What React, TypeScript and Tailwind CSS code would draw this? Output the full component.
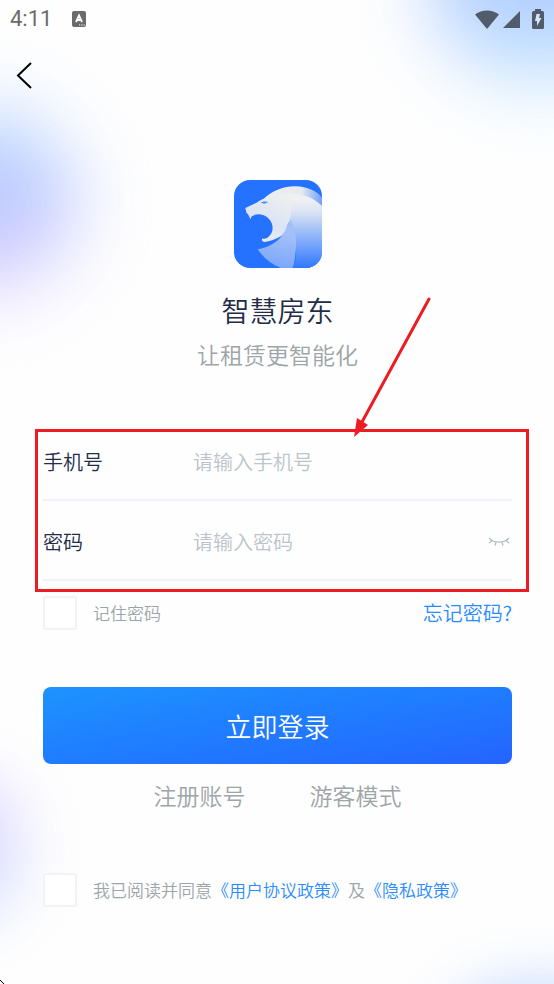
import React, { useState } from 'react';

const LionLogo: React.FC = () => (
  <svg viewBox="30 30 263 263" className="h-[88px] w-[88px]" role="img" aria-label="智慧房东">
    <defs>
      <clipPath id="tile">
        <rect x="30" y="30" width="263" height="263" rx="48" />
      </clipPath>
      <linearGradient id="mane" x1="0" y1="90" x2="0" y2="293" gradientUnits="userSpaceOnUse">
        <stop offset="0" stopColor="#eef0f3" />
        <stop offset="0.15" stopColor="#dfe6f3" />
        <stop offset="1" stopColor="#3078ff" />
      </linearGradient>
      <linearGradient id="crest" x1="120" y1="0" x2="293" y2="0" gradientUnits="userSpaceOnUse">
        <stop offset="0" stopColor="#eeeeee" />
        <stop offset="0.65" stopColor="#e6eaf1" />
        <stop offset="1" stopColor="#6f9ff8" />
      </linearGradient>
      <linearGradient id="chest" x1="180" y1="190" x2="160" y2="293" gradientUnits="userSpaceOnUse">
        <stop offset="0" stopColor="#a3c0f8" />
        <stop offset="1" stopColor="#7aa6fb" />
      </linearGradient>
      <linearGradient id="head" x1="190" y1="80" x2="130" y2="215" gradientUnits="userSpaceOnUse">
        <stop offset="0" stopColor="#efefef" />
        <stop offset="0.6" stopColor="#dbe4f5" />
        <stop offset="1" stopColor="#e8edf6" />
      </linearGradient>
    </defs>
    <g clipPath="url(#tile)">
      <rect x="30" y="30" width="263" height="263" fill="#2472ff" />
      <path d="M112 92 C148 58 182 48 214 49 C250 50 276 62 293 82 V112 C250 76 180 80 112 92 Z" fill="url(#crest)" />
      <path d="M150 80 C205 60 262 74 293 108 V293 H205 C215 275 217 250 215 228 L190 150 Z" fill="url(#mane)" />
      <path d="M101 237 C134 230 158 217 172 197 L200 148 C213 178 218 208 215 237 C213 260 211 276 205 293 H170 C139 281 116 260 101 237 Z" fill="url(#chest)" />
      <path
        d="M64 114 C76 109 86 103 98 98 C106 91 113 88 121 86 C145 73 170 70 196 76 C204 100 204 130 193 157 C186 176 181 188 170 198 C155 207 138 214 120 215 C113 214 112 208 115 205 C122 207 129 205 134 199 C145 190 148 174 143 160 C137 143 121 132 104 132 C94 132 87 135 82 140 L79 147 L72 132 L67 128 Z"
        fill="url(#head)"
      />
      <path d="M108 100 C114 94 124 93 133 96 C127 97 126 101 119 101 C115 98 112 99 108 100 Z" fill="#4d8afd" />
    </g>
  </svg>
);

const ClosedEye: React.FC = () => (
  <svg viewBox="0 0 22 10" className="h-[10px] w-[22px]" fill="none" stroke="#b4bec6" strokeWidth="1.3">
    <path d="M2 2.5 C7 6 15 6 20 2.5" />
    <path d="M1 1 L4 3.5 L1 6 M8 5 L7 8.5 M14 5 L15 8.5 M21 1 L18 3.5 L21 6" />
  </svg>
);

const StatusBar: React.FC = () => (
  <div className="flex h-[38px] items-center justify-between pl-[10px] pr-[10px]">
    <div className="flex items-center gap-5">
      <span className="font-[Roboto] text-[22px] font-normal leading-[38px] text-[#6b6b6b]">4:11</span>
      <svg viewBox="0 0 14 16" className="h-4 w-[14px]">
        <rect width="14" height="16" rx="2" fill="#6b6b6b" />
        <path d="M4 11 L7 4.5 L10 11 M5.2 9 H8.8" fill="none" stroke="#fff" strokeWidth="1.8" />
        <path d="M7 14h1.2 M9.3 14h1.2 M11.6 14h1.2" stroke="#fff" strokeWidth="1.2" />
      </svg>
    </div>
    <div className="flex items-center">
      <svg viewBox="0 0 24 19" className="h-[19px] w-6" fill="#505c69">
        <path d="M0 4.5 C7 -1 17 -1 24 4.5 L12 19 Z" />
      </svg>
      <svg viewBox="0 0 17 17" className="ml-1 h-[17px] w-[17px]" fill="#505c69">
        <path d="M17 0 V17 H0 Z" />
      </svg>
      <svg viewBox="0 0 12 20" className="ml-3 h-5 w-3">
        <path d="M3 2 V0 H9 V2 H10.5 Q12 2 12 3.5 V18.5 Q12 20 10.5 20 H1.5 Q0 20 0 18.5 V3.5 Q0 2 1.5 2 Z" fill="#505c69" />
        <path d="M4.5 5 H8 L7 9 H9.5 L5 17 V12 H3 Z" fill="#d5e6ff" />
      </svg>
    </div>
  </div>
);

// Soft colour patches behind the page
const Backdrop: React.FC = () => (
  <div className="pointer-events-none absolute inset-0 -z-10 overflow-hidden">
    <div className="absolute -right-[100px] -top-[120px] h-[205px] w-[225px] rounded-full bg-linear-to-b from-[#a9c6ff] from-50% to-[#c4e8ff] opacity-90 blur-[36px]" />
    <div className="absolute -left-[110px] top-[110px] h-[184px] w-[184px] rounded-full bg-linear-to-b from-[#b0d8ff] via-[#b4c0ff] to-[#e2d0ff] opacity-90 blur-[38px]" />
    <div className="absolute -left-[110px] top-[775px] h-[150px] w-[132px] rounded-full bg-linear-to-b from-[#dccfff] to-[#d4e3ff] opacity-90 blur-[30px]" />
    <div className="absolute -bottom-[154px] -right-[80px] h-[150px] w-[190px] rounded-full bg-[#a9c8ff] opacity-80 blur-[30px]" />
  </div>
);

const boxClass = 'h-[34px] w-[34px] shrink-0 appearance-none rounded-[3px] border-2 border-[#f2f2fa] bg-white checked:bg-[#2080ff]';

const App: React.FC = () => {
  const [phone, setPhone] = useState('');
  const [password, setPassword] = useState('');
  const [showPassword, setShowPassword] = useState(false);
  const [remember, setRemember] = useState(false);
  const [agreed, setAgreed] = useState(false);

  return (
    <div
      lang="zh-CN"
      className="relative isolate min-h-screen overflow-hidden bg-[#fefefe] font-['Noto_Sans_CJK_SC',sans-serif] font-[350] text-[#232c47]"
    >
      <Backdrop />
      <StatusBar />

      <header className="flex h-[75px] items-center pl-4">
        <button type="button" aria-label="返回" className="flex">
          <svg viewBox="0 0 16 27" className="h-[27px] w-4" fill="none" stroke="#000" strokeWidth="2">
            <path d="M15 1 L2 13.5 L15 26" />
          </svg>
        </button>
      </header>

      <main className="pl-[43px] pr-[42px] pt-[67px]">
        <div className="flex flex-col items-center">
          <LionLogo />
          <h1 className="mt-[22px] text-[28px] font-[350] leading-10">智慧房东</h1>
          <p className="mt-[7px] text-[23px] leading-[34px] text-[#9da5a8]">让租赁更智能化</p>
        </div>

        <form onSubmit={(e) => e.preventDefault()}>
          {/* Account fields */}
          <div className="relative mt-[50px]">
            <div className="flex h-20 items-center border-b-2 border-[#f2f2fa] pt-1">
              <label htmlFor="phone" className="w-[150px] text-[20px]">手机号</label>
              <input
                id="phone"
                type="tel"
                value={phone}
                onChange={(e) => setPhone(e.target.value)}
                placeholder="请输入手机号"
                className="min-w-0 flex-1 bg-transparent text-[20px] outline-none placeholder:text-[#bcc4ca]"
              />
            </div>
            <div className="flex h-20 items-center border-b-2 border-[#f2f2fa] pt-1">
              <label htmlFor="password" className="w-[150px] text-[20px]">密码</label>
              <input
                id="password"
                type={showPassword ? 'text' : 'password'}
                value={password}
                onChange={(e) => setPassword(e.target.value)}
                placeholder="请输入密码"
                className="min-w-0 flex-1 bg-transparent text-[20px] outline-none placeholder:text-[#bcc4ca]"
              />
              <button type="button" aria-label="显示密码" onClick={() => setShowPassword(!showPassword)} className="mr-[2px]">
                <ClosedEye />
              </button>
            </div>

            {/* Callout frame and arrow */}
            <div className="pointer-events-none absolute -bottom-[11px] -left-2 -right-[17px] top-2 border-3 border-[#ed1c24]" />
            <svg viewBox="0 0 80 142" className="pointer-events-none absolute -top-[125px] right-[80px] h-[142px] w-[80px]">
              <path d="M77 3 L10 126" stroke="#ed1c24" strokeWidth="3" strokeLinecap="round" />
              <path d="M2 141 L5 122 L16 129 Z" fill="#ed1c24" />
            </svg>
          </div>

          <div className="mt-[15px] flex items-center justify-between">
            <label className="flex items-center gap-4 text-[17px] text-[#9da5a8]">
              <input type="checkbox" checked={remember} onChange={(e) => setRemember(e.target.checked)} className={boxClass} />
              记住密码
            </label>
            <a href="#forgot" className="text-[20px] leading-8 text-[#2a8bff]">忘记密码?</a>
          </div>

          <button
            type="submit"
            className="mt-[57px] h-[77px] w-full rounded-lg bg-linear-to-br from-[#1e93ff] to-[#2563ff] text-[26px] text-white"
          >
            立即登录
          </button>

          <div className="mt-[14px] flex justify-center gap-16 text-[23px] leading-[34px] text-[#9da5a8]">
            <a href="#register">注册账号</a>
            <a href="#guest">游客模式</a>
          </div>

          <div className="mt-[61px] flex items-center gap-4 pb-[76px] text-[17px] text-[#9da5a8]">
            <input
              id="agree"
              type="checkbox"
              checked={agreed}
              onChange={(e) => setAgreed(e.target.checked)}
              className={boxClass}
            />
            <p>
              <label htmlFor="agree">我已阅读并同意</label>
              <a href="#terms" className="text-[#2a8bff]">《用户协议政策》</a>
              及
              <a href="#privacy" className="text-[#2a8bff]">《隐私政策》</a>
            </p>
          </div>
        </form>
      </main>

      {/* Pointer at the corner */}
      <svg viewBox="0 0 4 4" className="pointer-events-none absolute bottom-0 left-0 h-1 w-1" fill="#000">
        <path d="M0 0h1v1h1v1h1v1h1v1h-1v-1h-1v-1h-1v-1h-1z" />
      </svg>
    </div>
  );
};

export default App;
